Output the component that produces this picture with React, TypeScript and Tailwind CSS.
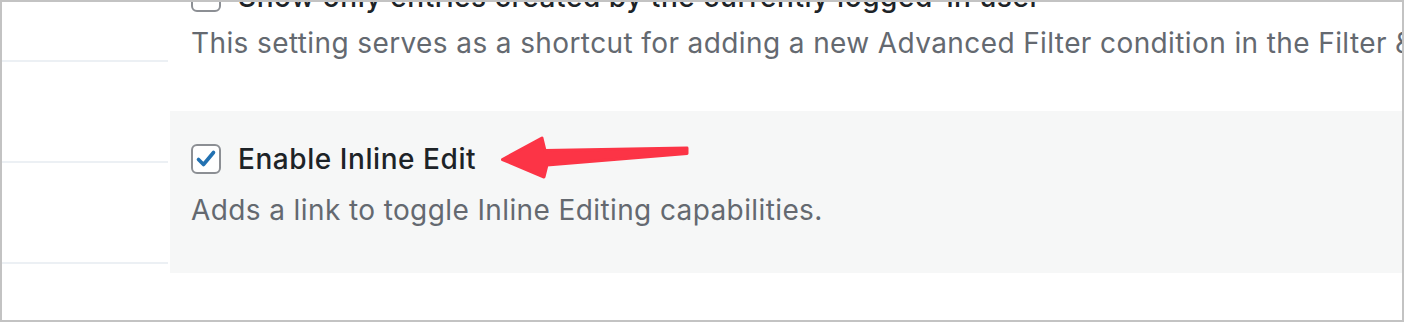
import React from 'react';

const font = { fontFamily: 'Inter, "Noto Sans", sans-serif' };

const Checkbox = ({ checked }: { checked?: boolean }) => (
  <span className="w-[30px] h-[30px] shrink-0 rounded-[6px] border-2 border-[#8c8f94] bg-white flex items-center justify-center">
    {checked && (
      <svg viewBox="0 0 24 24" className="w-[24px] h-[24px]">
        <path d="M4.5 12.5 L9.5 17.5 L19.5 5.5" fill="none" stroke="#2271b1" strokeWidth="3.6" strokeLinecap="round" strokeLinejoin="round" />
      </svg>
    )}
  </span>
);

const Arrow = () => (
  <svg className="absolute left-[330px] top-[24px]" width="192" height="48" viewBox="0 0 192 48">
    <path
      d="M2.5 24.5 L42 3 L45 15.5 L187 13 L187 18.5 L47 30 L44 42 Z"
      fill="#fc3446"
      stroke="#fc3446"
      strokeWidth="3"
      strokeLinejoin="round"
    />
  </svg>
);

export default function App() {
  return (
    <div style={font} className="w-[1404px] h-[322px] border-2 border-[#c3c3c3] bg-white flex overflow-hidden">
      <div className="w-[166px] shrink-0 flex flex-col">
        <div className="h-[60px] border-b-2 border-[#ecf0f4]" />
        <div className="h-[101px] border-b-2 border-[#ecf0f4]" />
        <div className="h-[101px] border-b-2 border-[#ecf0f4]" />
      </div>

      <div className="flex-1 ml-[2px] flex flex-col min-w-0">
        <div className="h-[109px] pl-[21px] whitespace-nowrap overflow-hidden">
          <div className="flex items-center gap-[17px] -mt-[22px] h-[34px]">
            <Checkbox />
            <span className="text-[28px] font-medium tracking-[0.02em] text-[#1d2327] leading-[34px]">Show only entries created by the currently logged-in user</span>
          </div>
          <p className="mt-[12px] text-[28px] leading-[34px] tracking-[0.014em] text-[#646970]">
            This setting serves as a shortcut for adding a new Advanced Filter condition in the Filter &amp; Sort settings.
          </p>
        </div>

        <div className="relative h-[162px] bg-[#f6f7f7] pl-[21px] pt-[31px] whitespace-nowrap">
          <label className="flex items-center gap-[17px] h-[34px]">
            <Checkbox checked />
            <span className="text-[28px] font-medium tracking-[0.02em] text-[#1d2327] leading-[34px]">Enable Inline Edit</span>
          </label>
          <p className="mt-[17px] text-[28px] leading-[34px] tracking-[0.014em] text-[#646970]">
            Adds a link to toggle Inline Editing capabilities.
          </p>
          <Arrow />
        </div>
      </div>
    </div>
  );
}
